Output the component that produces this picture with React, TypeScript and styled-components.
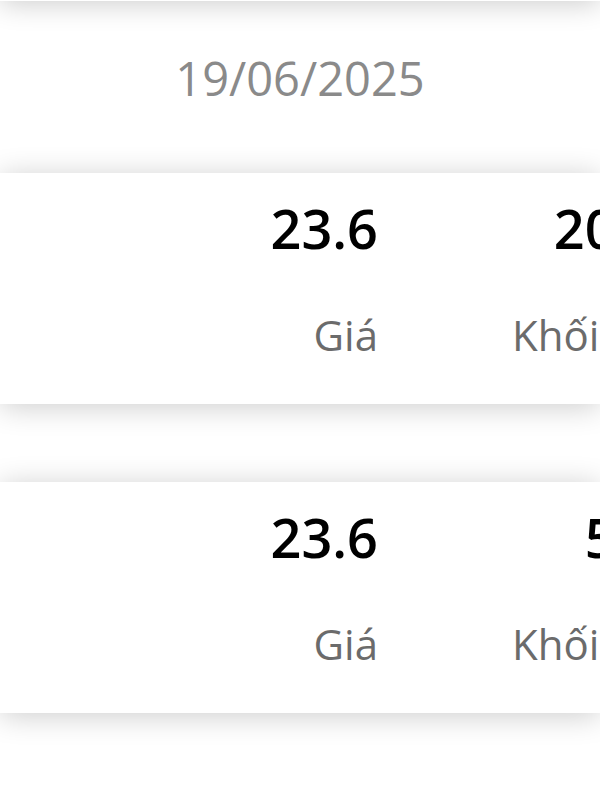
import React from "react";
import styled, { createGlobalStyle } from "styled-components";

const GlobalStyle = createGlobalStyle`
  html, body {
    margin: 0;
    padding: 0;
    background: #ffffff;
    overflow: hidden;
    font-family: "Open Sans", "Noto Sans", Arial, sans-serif;
  }
  body {
    min-height: 100vh;
  }
`;

const Page = styled.main`
  display: flex;
  flex-direction: column;
  margin-top: -60px;
  padding-bottom: 120px;
`;

const Card = styled.section`
  background: #ffffff;
  box-shadow: 0 3px 28px rgba(0, 0, 0, 0.2);
  overflow: hidden;
`;

const PrevCardTail = styled(Card)`
  height: 61px;
`;

const DateHeader = styled.h2`
  margin: 0;
  padding: 45px 0 62px;
  text-align: center;
  font-size: 47px;
  line-height: 65px;
  font-weight: 400;
  color: #8a8a8a;
`;

const TradeCard = styled(Card)`
  display: grid;
  grid-template-columns: 378px 345px;
  padding: 18px 0 40px;
  & + & {
    margin-top: 78px;
  }
`;

const Column = styled.div`
  display: flex;
  flex-direction: column;
  align-items: flex-end;
  gap: 41px;
  white-space: nowrap;
`;

const Value = styled.div`
  font-size: 54px;
  line-height: 74px;
  font-weight: 600;
  color: #000000;
`;

const Label = styled.div`
  font-size: 42px;
  line-height: 58px;
  font-weight: 400;
  color: #6b6b6b;
`;

type Trade = { price: string; volume: string };

const trades: Trade[] = [
  { price: "23.6", volume: "20.000" },
  { price: "23.6", volume: "5.000" },
];

export default function App() {
  return (
    <>
      <GlobalStyle />
      <Page>
        <PrevCardTail />
        <DateHeader>19/06/2025</DateHeader>
        {trades.map((t, i) => (
          <TradeCard key={i}>
            <Column>
              <Value>{t.price}</Value>
              <Label>Giá</Label>
            </Column>
            <Column>
              <Value>{t.volume}</Value>
              <Label>Khối lượng</Label>
            </Column>
          </TradeCard>
        ))}
      </Page>
    </>
  );
}
